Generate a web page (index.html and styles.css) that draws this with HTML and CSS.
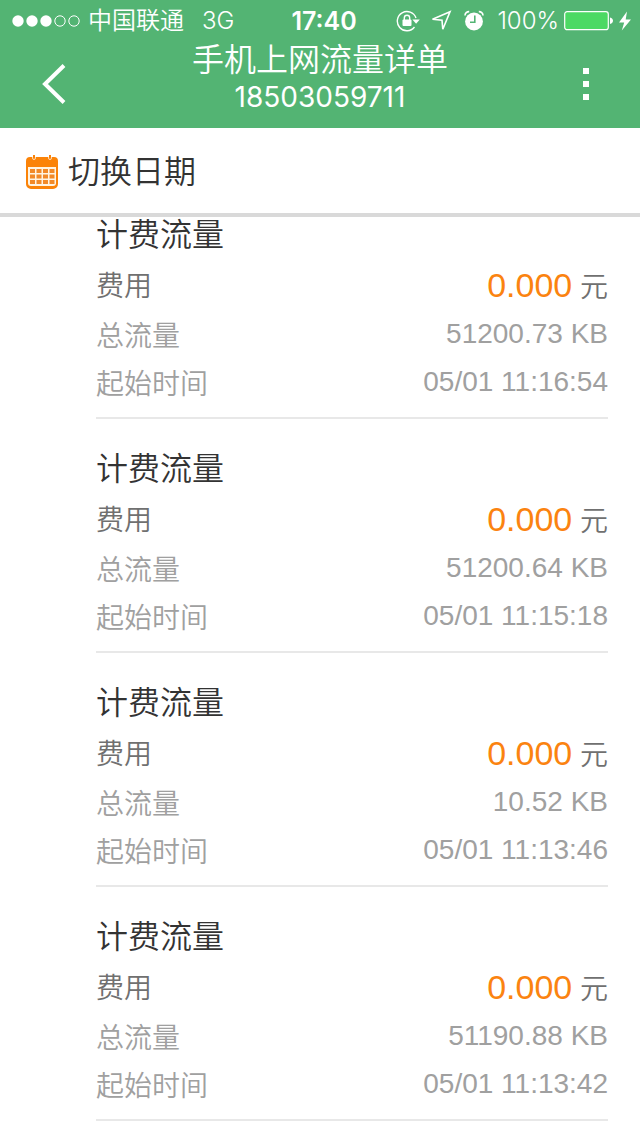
FILE: index.html
```html
<!DOCTYPE html>
<html lang="zh-CN">
<head>
<meta charset="utf-8">
<meta name="viewport" content="width=device-width, initial-scale=1">
<title>手机上网流量详单</title>
<link rel="stylesheet" href="styles.css">
</head>
<body>
<header class="top">
  <div class="status">
    <div class="status-left">
      <svg class="signal" width="68" height="12" viewBox="0 0 68 12" fill="#fff" aria-hidden="true">
        <circle cx="6" cy="6" r="5.7"/><circle cx="20" cy="6" r="5.7"/><circle cx="34" cy="6" r="5.7"/>
        <g fill="none" stroke="#fff"><circle cx="48" cy="6" r="5.2"/><circle cx="62" cy="6" r="5.2"/></g>
      </svg>
      <span class="carrier">中国联通</span>
      <span class="network">3G</span>
    </div>
    <div class="clock">17:40</div>
    <div class="status-right">
      <svg width="24" height="22" viewBox="0 0 24 22" fill="none" stroke="#fff" stroke-width="1.4" aria-hidden="true">
        <path d="M20 8A9.600 9.600 0 1 0 18.500 17"/>
        <path d="M16.400 9.500h7.400l-3.700 4.200z" fill="#fff" stroke="none"/>
        <rect x="6.500" y="9.500" width="9" height="6.500" rx="1" fill="#fff" stroke="none"/>
        <path d="M8.300 10V8a2.700 2.700 0 0 1 5.400 0v2"/>
      </svg>
      <svg class="location" width="22" height="22" viewBox="0 0 22 22" fill="none" stroke="#fff" stroke-width="1.6" aria-hidden="true">
        <path d="M20 1.800L2.500 9.300l9.500.900.800 9z"/>
      </svg>
      <svg class="alarm" width="20" height="22" viewBox="0 0 20 22" aria-hidden="true">
        <circle cx="10" cy="11.500" r="8.900" fill="#fff"/>
        <path d="M1 5.600A4 4 0 0 1 5.200 1.600M19 5.600A4 4 0 0 0 14.800 1.600" fill="none" stroke="#fff" stroke-width="1.600"/>
        <path d="M10.800 5.500v6.700H6" fill="none" stroke="#53b473" stroke-width="1.600"/>
      </svg>
      <span class="percent">100%</span>
      <svg class="battery" width="50" height="20" viewBox="0 0 50 20" aria-hidden="true">
        <rect x=".7" y=".7" width="43.600" height="18" rx="2.500" fill="#4cd964" stroke="#fff" stroke-width="1.200"/>
        <path d="M46 6.500c4 .5 4 6 0 6.500z" fill="#fff"/>
      </svg>
      <svg width="14" height="20" viewBox="0 0 14 20" fill="#fff" aria-hidden="true"><path d="M9 .5L1 11.500h5.200L3.800 19.500 13 8.500H7.700z"/></svg>
    </div>
  </div>
  <nav class="nav">
    <button class="nav-button" type="button" aria-label="返回">
      <svg width="26" height="40" viewBox="0 0 26 40" fill="none" stroke="#fff" stroke-width="4"><path d="M23 1.500L4 20l19 18.500"/></svg>
    </button>
    <div class="heading">
      <h1 class="title">手机上网流量详单</h1>
      <p class="number">18503059711</p>
    </div>
    <button class="nav-button" type="button" aria-label="更多">
      <svg width="6" height="32" viewBox="0 0 6 32" fill="#fff"><path d="M0 0h6v6H0zM0 13h6v6H0zM0 26h6v6H0z"/></svg>
    </button>
  </nav>
</header>
<button class="date-switch" type="button">
  <svg width="32" height="34" viewBox="0 0 32 34" aria-hidden="true">
    <path fill="#fb8308" d="M4 2h3V0h2v2h14V0h2v2h3a4 4 0 0 1 4 4v23a5 5 0 0 1-5 5H5a5 5 0 0 1-5-5V6a4 4 0 0 1 4-4z"/>
    <path fill="none" stroke="#fff" stroke-width=".7" d="M6.500 1.500v1.500a1.500 1.500 0 0 0 3 0V1.500M22.500 1.500v1.500a1.500 1.500 0 0 0 3 0V1.500"/>
    <path fill="#fff4e2" d="M2 12h28v16a3 3 0 0 1-3 3H5a3 3 0 0 1-3-3z"/>
    <path fill="#f28a28" d="M4 14h5v4H4zM10.500 14h5v4h-5zM17 14h5v4h-5zM23.500 14h5v4h-5zM4 19.500h5v4H4zM10.500 19.500h5v4h-5zM17 19.500h5v4h-5zM23.500 19.500h5v4h-5zM4 25h5v4H4zM10.500 25h5v4h-5zM17 25h5v4h-5zM23.500 25h5v4h-5z"/>
  </svg>
  <span>切换日期</span>
</button>
<main class="records">
  <section class="record">
    <h2 class="record-title">计费流量</h2>
    <dl class="rows">
      <div class="row fee"><dt>费用</dt><dd><span class="amount">0.000</span> 元</dd></div>
      <div class="row"><dt>总流量</dt><dd>51200.73 KB</dd></div>
      <div class="row"><dt>起始时间</dt><dd>05/01 11:16:54</dd></div>
    </dl>
  </section>
  <section class="record">
    <h2 class="record-title">计费流量</h2>
    <dl class="rows">
      <div class="row fee"><dt>费用</dt><dd><span class="amount">0.000</span> 元</dd></div>
      <div class="row"><dt>总流量</dt><dd>51200.64 KB</dd></div>
      <div class="row"><dt>起始时间</dt><dd>05/01 11:15:18</dd></div>
    </dl>
  </section>
  <section class="record">
    <h2 class="record-title">计费流量</h2>
    <dl class="rows">
      <div class="row fee"><dt>费用</dt><dd><span class="amount">0.000</span> 元</dd></div>
      <div class="row"><dt>总流量</dt><dd>10.52 KB</dd></div>
      <div class="row"><dt>起始时间</dt><dd>05/01 11:13:46</dd></div>
    </dl>
  </section>
  <section class="record">
    <h2 class="record-title">计费流量</h2>
    <dl class="rows">
      <div class="row fee"><dt>费用</dt><dd><span class="amount">0.000</span> 元</dd></div>
      <div class="row"><dt>总流量</dt><dd>51190.88 KB</dd></div>
      <div class="row"><dt>起始时间</dt><dd>05/01 11:13:42</dd></div>
    </dl>
  </section>
</main>
</body>
</html>
```

FILE: styles.css
```css
* { box-sizing: border-box; }

body,
h1,
h2,
p,
dl,
dd {
  margin: 0;
}

body {
  background: #fff;
  color: #333;
  font-family: "Liberation Sans", "Noto Sans CJK SC", sans-serif;
  font-weight: 350;
}

button {
  border: 0;
  padding: 0;
  background: none;
  color: inherit;
  font: inherit;
}

svg { display: block; flex: none; }

.top {
  background: #53b473;
  color: #fff;
  font-family: Inter, "Noto Sans CJK SC", sans-serif;
}

.status {
  display: grid;
  grid-template-columns: 1fr auto 1fr;
  align-items: center;
  height: 40px;
  padding: 0 8px 0 12px;
  font-size: 24px;
  line-height: 42px;
}

.status-left,
.status-right {
  display: flex;
  align-items: center;
  white-space: nowrap;
}

.carrier { margin-left: 8px; }
.network { margin-left: 18px; }

.clock {
  padding-left: 4px;
  font-size: 25px;
  font-weight: 600;
}

.status-right { justify-content: flex-end; }
.location { margin-left: 10px; }
.alarm { margin-left: 12px; }
.percent { margin-left: 13px; }
.battery { margin: 0 4px 0 5px; }

.nav {
  display: grid;
  grid-template-columns: 108px 1fr 108px;
  height: 88px;
}

.nav-button {
  display: flex;
  align-items: center;
  justify-content: center;
}

.heading { text-align: center; }

.title {
  font-size: 32px;
  font-weight: 350;
  line-height: 40px;
}

.number {
  font-size: 28px;
  font-weight: 400;
  line-height: 34px;
}

.date-switch {
  display: flex;
  align-items: center;
  gap: 10px;
  width: 100%;
  height: 89px;
  padding: 2px 26px 0;
  border-bottom: 4px solid #d9d9d9;
  font-size: 32px;
  line-height: 40px;
}

.records { padding: 0 32px 0 96px; }

.record {
  padding-bottom: 11px;
  border-bottom: 2px solid #e8e8e8;
}

.record + .record { padding-top: 32px; }

.record-title {
  font-size: 32px;
  font-weight: 350;
  line-height: 36px;
}

.rows { padding-top: 9px; }

.row {
  display: flex;
  align-items: center;
  justify-content: space-between;
  height: 48px;
  color: #a0a0a0;
  font-size: 28px;
  line-height: 48px;
}

.row dt { padding-top: 5px; }

.fee { color: #707070; }

.fee dt { padding-top: 2px; }

.amount {
  color: #fb8310;
  font-size: 34px;
}
```
